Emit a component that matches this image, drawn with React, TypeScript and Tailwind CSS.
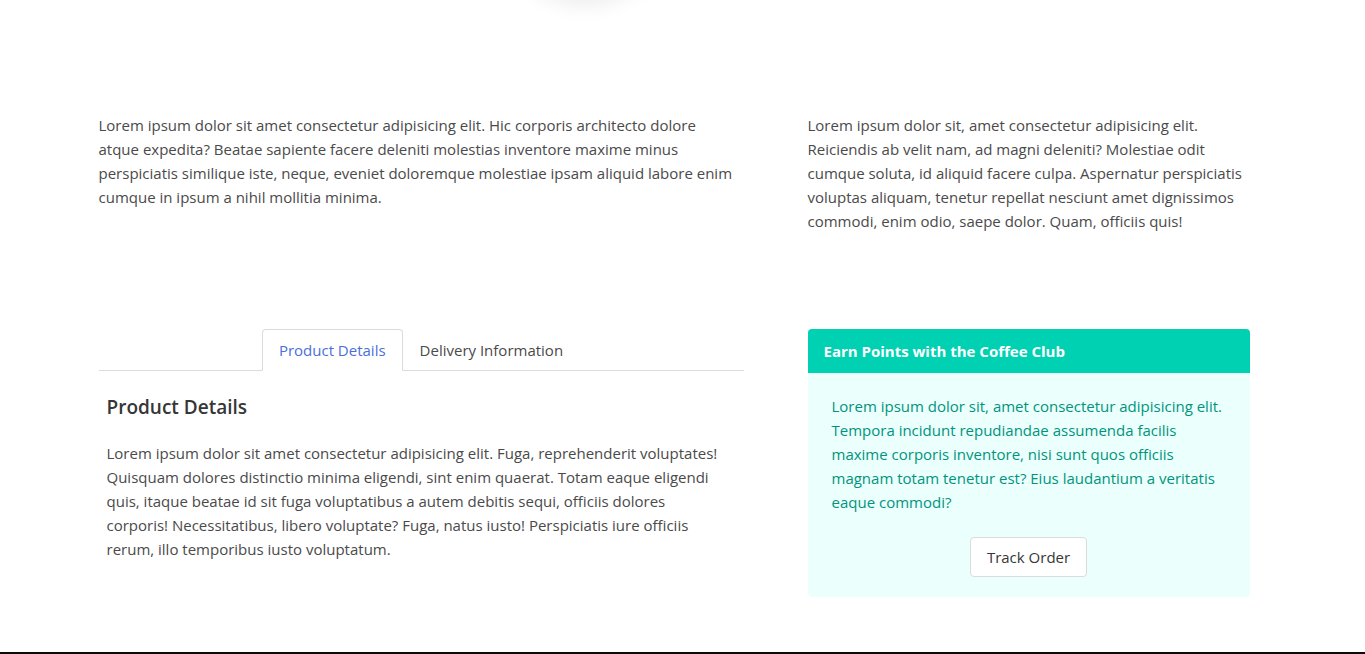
import React from "react";

const App = () => {
  return (
    <div className="min-h-screen bg-white font-['Open_Sans',sans-serif] text-[15px] leading-6 text-[#4a4a4a]">
      <div className="pr-4">
        {/* bottom edge of the image card from the section above */}
        <div className="h-[113px] overflow-hidden">
          <div className="mx-auto w-[1152px]">
            <div className="ml-[401px] -mt-[170px] h-[170px] w-[170px] rounded-full bg-white shadow-[0_6px_20px_rgba(0,0,0,0.07)]" />
          </div>
        </div>

        <div className="mx-auto grid w-[1152px] grid-cols-[645px_442px] gap-x-16">
          <p className="max-w-[640px]">
            Lorem ipsum dolor sit amet consectetur adipisicing elit. Hic corporis architecto dolore atque expedita? Beatae
            sapiente facere deleniti molestias inventore maxime minus perspiciatis similique iste, neque, eveniet
            doloremque molestiae ipsam aliquid labore enim cumque in ipsum a nihil mollitia minima.
          </p>
          <p>
            Lorem ipsum dolor sit, amet consectetur adipisicing elit. Reiciendis ab velit nam, ad magni deleniti?
            Molestiae odit cumque soluta, id aliquid facere culpa. Aspernatur perspiciatis voluptas aliquam, tenetur
            repellat nesciunt amet dignissimos commodi, enim odio, saepe dolor. Quam, officiis quis!
          </p>
        </div>

        <div className="mx-auto mt-[96px] grid w-[1152px] grid-cols-[645px_442px] gap-x-16">
          <div>
            <ul className="flex justify-center border-b border-[#dbdbdb]">
              <li className="-mb-px">
                <a className="block rounded-t border border-[#dbdbdb] border-b-transparent bg-white px-4 py-2 text-[#4a6fdc]">
                  Product Details
                </a>
              </li>
              <li className="-mb-px">
                <a className="block border border-transparent px-4 py-2 text-[#4a4a4a]">Delivery Information</a>
              </li>
            </ul>
            <div className="px-2">
              <h4 className="mt-6 mb-[22px] text-[19px] leading-6 font-semibold text-[#363636]">Product Details</h4>
              <p className="max-w-[620px]">
                Lorem ipsum dolor sit amet consectetur adipisicing elit. Fuga, reprehenderit voluptates! Quisquam dolores
                distinctio minima eligendi, sint enim quaerat. Totam eaque eligendi quis, itaque beatae id sit fuga
                voluptatibus a autem debitis sequi, officiis dolores corporis! Necessitatibus, libero voluptate? Fuga,
                natus iusto! Perspiciatis iure officiis rerum, illo temporibus iusto voluptatum.
              </p>
            </div>
          </div>

          <div className="rounded bg-[#ebfffc]">
            <div className="rounded-t bg-[#00d1b2] px-4 py-3 text-[15px] leading-5 font-bold text-white">
              Earn Points with the Coffee Club
            </div>
            <div className="px-6 pt-[21px] pb-5 text-[#00947e]">
              <p>
                Lorem ipsum dolor sit, amet consectetur adipisicing elit. Tempora incidunt repudiandae assumenda facilis
                maxime corporis inventore, nisi sunt quos officiis magnam totam tenetur est? Eius laudantium a veritatis
                eaque commodi?
              </p>
              <div className="mt-[23px] flex justify-center">
                <button className="h-10 rounded border border-[#dbdbdb] bg-white px-4 text-[#363636]">Track Order</button>
              </div>
            </div>
          </div>
        </div>
      </div>

      <footer className="mt-[55px] h-[240px] bg-[#0a0a0a]" />
    </div>
  );
};

export default App;
